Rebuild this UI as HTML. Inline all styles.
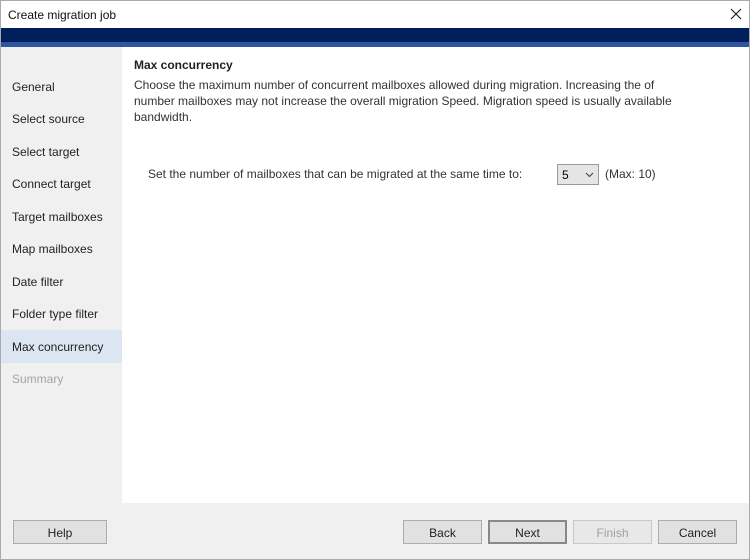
<!DOCTYPE html>
<html><head><meta charset="utf-8"><style>
*{margin:0;padding:0;box-sizing:border-box}
body{width:750px;height:560px;overflow:hidden;font-family:"Liberation Sans",sans-serif;font-size:12px;color:#222;background:#f0f0f0;position:relative}
.win{position:absolute;left:0;top:0;width:750px;height:560px;border:1px solid #aaa;background:#f0f0f0}
.title{position:absolute;left:0;top:0;width:748px;height:27px;background:#fff;font-size:12px;padding:7px 0 0 7px;color:#111}
.x{position:absolute;right:7px;top:7px}
.navy{position:absolute;left:0;top:27px;width:748px;height:14px;background:#001f5c}
.blue{position:absolute;left:0;top:41px;width:748px;height:5px;background:#2e55a0}
.side{position:absolute;left:0;top:46px;width:121px;height:456px;background:#f0f0f0}
.item{position:absolute;left:0;width:121px;height:33px;padding:9px 0 0 11px;color:#222}
.sel{background:#dce6f3}
.dis{color:#a5a5a5}
.main{position:absolute;left:121px;top:46px;width:627px;height:456px;background:#fff}
h1{position:absolute;left:12px;top:11px;font-size:12px;font-weight:bold;color:#222}
.desc{position:absolute;left:12px;top:30px;width:560px;line-height:16px;color:#333}
.lbl{position:absolute;left:26px;top:120px;color:#333}
.sel5{position:absolute;left:435px;top:117px;width:42px;height:21px;border:1px solid #999;background:#e5e5e5;padding:3px 0 0 4px;color:#000}
.sel5 svg{position:absolute;right:4px;top:7px}
.max{position:absolute;left:483px;top:120px;color:#333}
.btn{position:absolute;top:519px;height:24px;width:79px;border:1px solid #adadad;background:#e1e1e1;text-align:center;padding-top:5px;color:#222}
</style></head><body>
<div class="win">
<div class="title">Create migration job<svg class="x" width="12" height="12" viewBox="0 0 12 12"><path d="M1 1L11 11M11 1L1 11" stroke="#222" stroke-width="1.2"/></svg></div>
<div class="navy"></div><div class="blue"></div>
<div class="side">
<div class="item" style="top:24px">General</div>
<div class="item" style="top:56px">Select source</div>
<div class="item" style="top:89px">Select target</div>
<div class="item" style="top:121px">Connect target</div>
<div class="item" style="top:154px">Target mailboxes</div>
<div class="item" style="top:186px">Map mailboxes</div>
<div class="item" style="top:219px">Date filter</div>
<div class="item" style="top:251px">Folder type filter</div>
<div class="item sel" style="top:283px;padding-top:10px">Max concurrency</div>
<div class="item dis" style="top:316px">Summary</div>
</div>
<div class="main">
<h1>Max concurrency</h1>
<div class="desc">Choose the maximum number of concurrent mailboxes allowed during migration. Increasing the of number mailboxes may not increase the overall migration Speed. Migration speed is usually available bandwidth.</div>
<div class="lbl">Set the number of mailboxes that can be migrated at the same time to:</div>
<div class="sel5">5<svg width="9" height="6" viewBox="0 0 9 6"><path d="M1 1l3.5 3.5L8 1" fill="none" stroke="#444" stroke-width="1.1"/></svg></div>
<div class="max">(Max: 10)</div>
</div>
<div class="btn" style="left:12px;width:94px">Help</div>
<div class="btn" style="left:402px">Back</div>
<div class="btn" style="left:487px;border:2px solid #888;padding-top:4px">Next</div>
<div class="btn" style="left:572px;color:#a0a0a0;background:#e8e8e8;border-color:#c8c8c8">Finish</div>
<div class="btn" style="left:657px">Cancel</div>
</div>
</body></html>
